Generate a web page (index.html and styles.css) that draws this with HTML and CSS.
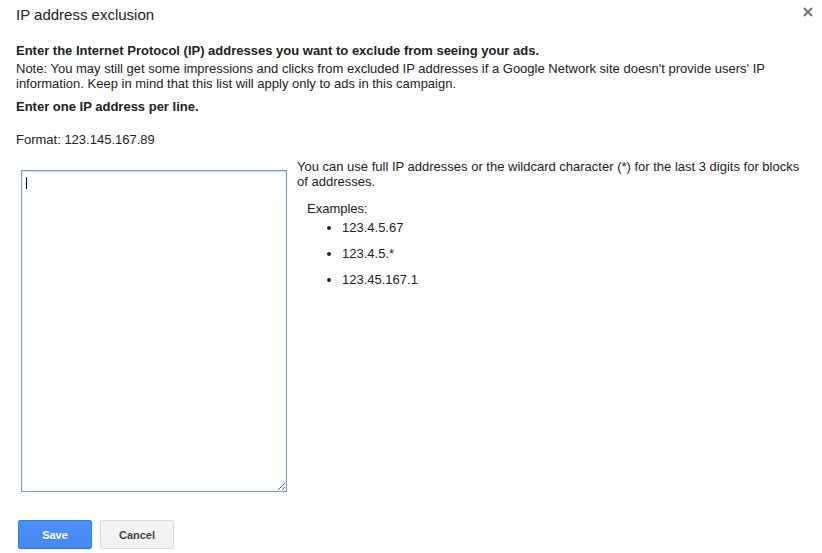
FILE: index.html
```html
<!DOCTYPE html>
<html>
<head>
<meta charset="utf-8">
<title>IP address exclusion</title>
<link rel="stylesheet" href="styles.css">
</head>
<body>
<div class="dialog">
  <div class="header">
    <h1 class="title">IP address exclusion</h1>
    <span class="close" aria-label="Close">
      <svg width="10" height="10" viewBox="0 0 10 10"><path d="M1 1L9 9M9 1L1 9" stroke="#777" stroke-width="2.2" fill="none"/></svg>
    </span>
  </div>
  <p class="lead">Enter the Internet Protocol (IP) addresses you want to exclude from seeing your ads.</p>
  <p class="note">Note: You may still get some impressions and clicks from excluded IP addresses if a Google Network site doesn't provide users' IP information. Keep in mind that this list will apply only to ads in this campaign.</p>
  <p class="lead per-line">Enter one IP address per line.</p>
  <p class="format">Format: 123.145.167.89</p>
  <div class="entry">
    <div class="field">
      <textarea class="ips"></textarea>
      <span class="caret"></span>
    </div>
    <div class="help">
      <p class="help-text">You can use full IP addresses or the wildcard character (*) for the last 3 digits for blocks of addresses.</p>
      <p class="examples-label">Examples:</p>
      <ul class="examples">
        <li>123.4.5.67</li>
        <li>123.4.5.*</li>
        <li>123.45.167.1</li>
      </ul>
    </div>
  </div>
  <div class="actions">
    <button class="btn btn-primary">Save</button>
    <button class="btn btn-default">Cancel</button>
  </div>
</div>
</body>
</html>
```

FILE: styles.css
```css
html, body {
  margin: 0;
  padding: 0;
  background: #fff;
}
body {
  font-family: "Liberation Sans", Arial, sans-serif;
  font-size: 13px;
  line-height: 15px;
  color: #222;
}
.dialog {
  padding: 0 9px 0 16px;
}
.header {
  display: flex;
  justify-content: space-between;
  align-items: flex-start;
  padding-top: 6px;
}
.title {
  margin: 0;
  font-size: 15px;
  line-height: 18px;
  font-weight: normal;
  color: #222;
}
.close {
  display: block;
  margin-top: 1px;
  width: 10px;
  height: 10px;
}
.close svg { display: block; }
p { margin: 0; }
.lead {
  font-weight: bold;
  margin-top: 19px;
}
.note {
  margin-top: 3px;
}
.per-line {
  margin-top: 8px;
}
.format {
  margin-top: 18px;
}
.entry {
  display: flex;
  align-items: flex-start;
  margin-top: 14px;
}
.field {
  position: relative;
  margin: 9px 10px 0 5px;
  flex: none;
}
.ips {
  display: block;
  box-sizing: border-box;
  width: 266px;
  height: 322px;
  margin: 0;
  padding: 4px;
  border: 1px solid #6f9ff5;
  border-top-color: #6594f0;
  box-shadow: inset 0 1px 2px rgba(0,0,0,0.18);
  outline: none;
  font-family: "Liberation Sans", Arial, sans-serif;
  font-size: 13px;
  background: #fff;
}
.caret {
  position: absolute;
  left: 5px;
  top: 7px;
  width: 1px;
  height: 12px;
  background: #000;
}
.help {
  flex: 1;
}
.help-text {
  margin: -2px 0 0;
}
.examples-label {
  margin: 12px 0 0 10px;
}
.examples {
  margin: 4px 0 0;
  padding: 0 0 0 45px;
  list-style: disc;
}
.examples li {
  margin-bottom: 11px;
}
.actions {
  display: flex;
  gap: 8px;
  margin: 28px 0 0 2px;
}
.btn {
  box-sizing: border-box;
  width: 74px;
  height: 29px;
  padding: 0;
  border-radius: 2px;
  font-family: "Liberation Sans", Arial, sans-serif;
  font-size: 11px;
  font-weight: bold;
  cursor: default;
}
.btn-primary {
  color: #fff;
  background: linear-gradient(#4d90fe, #4787ed);
  border: 1px solid #3079ed;
  text-shadow: 0 1px rgba(0,0,0,0.1);
}
.btn-default {
  color: #444;
  background: linear-gradient(#f5f5f5, #f1f1f1);
  border: 1px solid #dcdcdc;
}
```
